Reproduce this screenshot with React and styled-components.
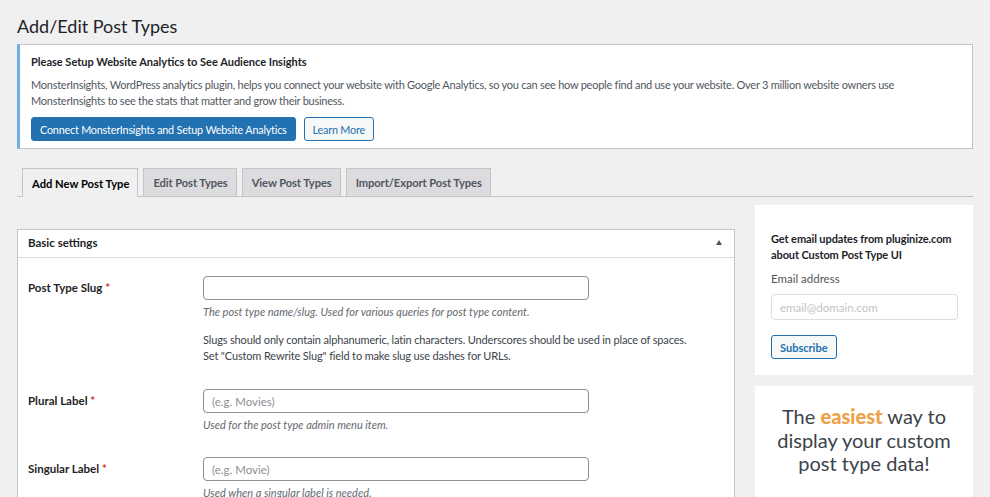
import styled, { createGlobalStyle } from 'styled-components'

const GlobalStyle = createGlobalStyle`
    body {
        margin: 0;
        background: #f0f0f1;
        font-family: Lato, "Open Sans", sans-serif;
        color: #3c434a;
        font-size: 11px;
    }
`

const Wrap = styled.div`
    padding: 0 17px 40px;
`
const Title = styled.h1`
    margin: 0;
    padding-top: 13px;
    font-size: 18px;
    line-height: 27px;
    font-weight: 400;
    color: #1d2327;
`
const Notice = styled.div`
    margin-top: 4px;
    background: #fff;
    border: 1px solid #c3c4c7;
    border-left: 3px solid #72aee6;
    padding: 9px 11px 7px;
`
const NoticeTitle = styled.div`
    font-weight: 700;
    color: #1d2327;
    font-size: 11px;
    line-height: 16px;
`
const NoticeText = styled.p`
    margin: 7px 0 0;
    font-size: 11px;
    letter-spacing: -0.25px;
    line-height: 15.5px;
    color: #50575e;
    white-space: nowrap;
`
const ButtonRow = styled.div`
    display: flex;
    gap: 8px;
    margin-top: 9px;
`
const Button = styled.button`
    height: 24px;
    padding: 0 8px;
    border-radius: 3px;
    font-family: inherit;
    font-size: ${p => (p.$bold ? '11px' : '10.8px')};
    letter-spacing: ${p => (p.$bold ? '0' : '-0.2px')};
    border: 1px solid #2271b1;
    background: ${p => (p.$primary ? '#2271b1' : '#f6f7f7')};
    color: ${p => (p.$primary ? '#fff' : '#2271b1')};
    font-weight: ${p => (p.$bold ? 700 : 400)};
`
const Tabs = styled.div`
    display: flex;
    gap: 5px;
    margin-top: 19px;
    padding-left: 5px;
    border-bottom: 1px solid #c3c4c7;
`
const Tab = styled.div`
    display: flex;
    align-items: center;
    padding: 0 8px 0 9px;
    border: 1px solid #c3c4c7;
    border-bottom: none;
    font-size: 11.2px;
    font-weight: 700;
    letter-spacing: ${p => (p.$active ? '0' : '-0.1px')};
    background: ${p => (p.$active ? '#f0f0f1' : '#dcdcde')};
    color: ${p => (p.$active ? '#000' : '#50575e')};
    margin-bottom: ${p => (p.$active ? '-1px' : '0')};
    height: ${p => (p.$active ? '28px' : '27px')};
`
const Body = styled.div`
    display: flex;
    gap: 20px;
    margin-top: 8px;
    align-items: flex-start;
`
const Main = styled.div`
    flex: 1;
    padding-top: 24px;
`
const Panel = styled.div`
    background: #fff;
    border: 1px solid #c3c4c7;
`
const PanelHead = styled.div`
    box-sizing: border-box;
    height: 28px;
    display: flex;
    align-items: center;
    justify-content: space-between;
    padding: 0 10px 2px;
    border-bottom: 1px solid #dcdcde;
    font-weight: 700;
    font-size: 11.5px;
    color: #1d2327;
`
const Arrow = styled.span`
    width: 0;
    height: 0;
    border-left: 3.5px solid transparent;
    border-right: 3.5px solid transparent;
    border-bottom: 5px solid #50575e;
    margin-right: 2px;
`
const PanelBody = styled.div`
    padding: 6px 0 0;
`
const Row = styled.div`
    display: grid;
    grid-template-columns: 175px 1fr;
    padding: 12px 10px;
`
const Label = styled.div`
    line-height: 24px;
    font-weight: 700;
    color: #1d2327;
    font-size: 11.5px;
    & span {
        color: #d63638;
    }
`
const Input = styled.input`
    box-sizing: border-box;
    width: ${p => p.$w || '386px'};
    height: ${p => p.$h || '24px'};
    margin-top: ${p => p.$mt || '0'};
    border: 1px solid ${p => p.$line || '#8c8f94'};
    border-radius: 4px;
    padding: 0 8px;
    font-family: inherit;
    font-size: 11.5px;
    color: #2c3338;
    &::placeholder {
        color: ${p => p.$ph || '#8c8f94'};
    }
`
const Help = styled.div`
    margin-top: 4px;
    font-style: italic;
    line-height: 16px;
    color: #646970;
    font-size: 11px;
`
const Note = styled.p`
    margin: 12px 0 1px;
    line-height: 16px;
    color: #3c434a;
    font-size: 11px;
    letter-spacing: -0.15px;
    white-space: nowrap;
`
const Side = styled.div`
    width: 218px;
    display: flex;
    flex-direction: column;
    gap: 11px;
`
const Card = styled.div`
    background: #fff;
    padding: ${p => p.$pad || '26px 16px 16px'};
`
const CardTitle = styled.div`
    font-weight: 700;
    line-height: 15.5px;
    color: #1d2327;
    font-size: 11px;
    letter-spacing: -0.1px;
    white-space: nowrap;
`
const CardLabel = styled.div`
    margin-top: 9px;
    line-height: 16px;
    color: #50575e;
    font-size: 11.5px;
`
const SubscribeWrap = styled.div`
    margin-top: 15px;
`
const Promo = styled.div`
    text-align: center;
    font-size: 20px;
    line-height: 23.5px;
    color: #3c434a;
    & b {
        color: #f0a046;
        font-weight: 900;
    }
`

const fields = [
    { label: 'Plural Label', placeholder: '(e.g. Movies)', help: 'Used for the post type admin menu item.' },
    { label: 'Singular Label', placeholder: '(e.g. Movie)', help: 'Used when a singular label is needed.' },
]

const App = () => {
    return (
        <Wrap>
            <GlobalStyle />
            <Title>Add/Edit Post Types</Title>
            <Notice>
                <NoticeTitle>Please Setup Website Analytics to See Audience Insights</NoticeTitle>
                <NoticeText>
                    MonsterInsights, WordPress analytics plugin, helps you connect your website with Google Analytics, so you can see how people find and use your website. Over 3 million website owners use
                    <br />MonsterInsights to see the stats that matter and grow their business.
                </NoticeText>
                <ButtonRow>
                    <Button $primary>Connect MonsterInsights and Setup Website Analytics</Button>
                    <Button>Learn More</Button>
                </ButtonRow>
            </Notice>
            <Tabs>
                <Tab $active>Add New Post Type</Tab>
                <Tab>Edit Post Types</Tab>
                <Tab>View Post Types</Tab>
                <Tab>Import/Export Post Types</Tab>
            </Tabs>
            <Body>
                <Main>
                    <Panel>
                        <PanelHead>
                            <span>Basic settings</span>
                            <Arrow />
                        </PanelHead>
                        <PanelBody>
                            <Row>
                                <Label>Post Type Slug <span>*</span></Label>
                                <div>
                                    <Input type="text" />
                                    <Help>The post type name/slug. Used for various queries for post type content.</Help>
                                    <Note>
                                        Slugs should only contain alphanumeric, latin characters. Underscores should be used in place of spaces.
                                        <br />Set "Custom Rewrite Slug" field to make slug use dashes for URLs.
                                    </Note>
                                </div>
                            </Row>
                            {fields.map(f => (
                                <Row key={f.label}>
                                    <Label>{f.label} <span>*</span></Label>
                                    <div>
                                        <Input type="text" placeholder={f.placeholder} />
                                        <Help>{f.help}</Help>
                                    </div>
                                </Row>
                            ))}
                        </PanelBody>
                    </Panel>
                </Main>
                <Side>
                    <Card>
                        <CardTitle>Get email updates from pluginize.com<br />about Custom Post Type UI</CardTitle>
                        <CardLabel>Email address</CardLabel>
                        <Input type="email" placeholder="email@domain.com" $w="187px" $h="26px" $mt="7px" $line="#dcdcde" $ph="#c3c4c7" />
                        <SubscribeWrap>
                            <Button $bold>Subscribe</Button>
                        </SubscribeWrap>
                    </Card>
                    <Card $pad="19px 16px 60px">
                        <Promo>
                            The <b>easiest</b> way to<br />display your custom<br />post type data!
                        </Promo>
                    </Card>
                </Side>
            </Body>
        </Wrap>
    )
}

export default App
